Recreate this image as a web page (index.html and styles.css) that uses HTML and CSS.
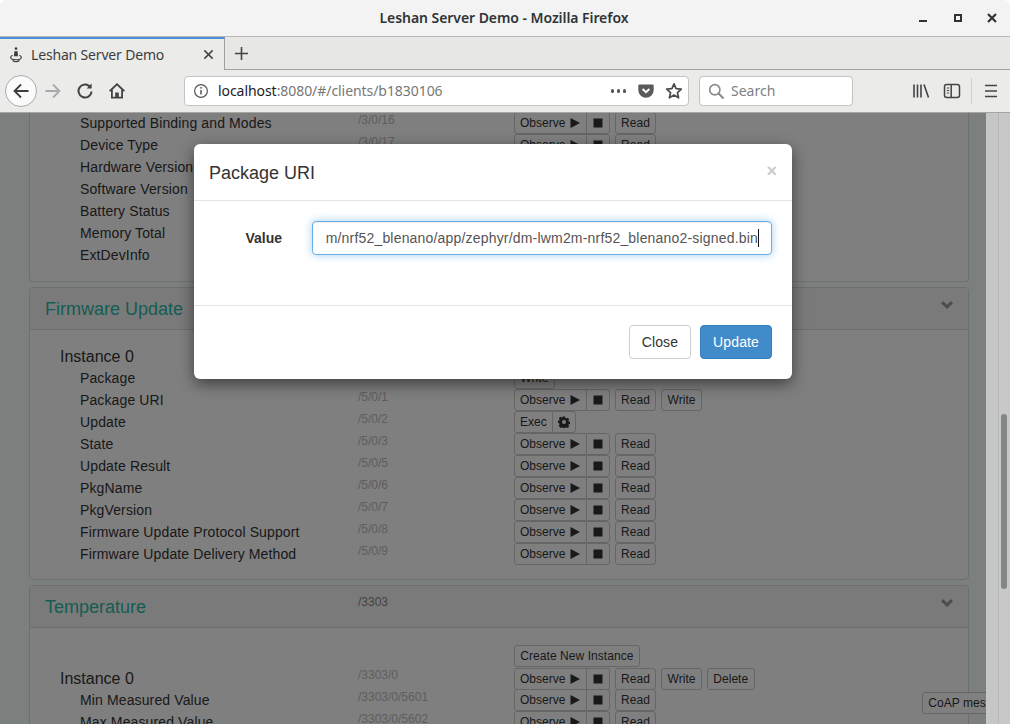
FILE: index.html
```html
<!DOCTYPE html>
<html lang="en">
<head>
<meta charset="utf-8">
<title>Leshan Server Demo - Mozilla Firefox</title>
<link rel="stylesheet" href="styles.css">
</head>
<body>
<svg class="defs" width="0" height="0" aria-hidden="true">
  <defs>
    <symbol id="play" viewBox="0 0 12 12"><path d="M1.5 1 L11 6 L1.5 11 Z"/></symbol>
    <symbol id="stop" viewBox="0 0 12 12"><rect x="1.5" y="1.5" width="9" height="9"/></symbol>
    <symbol id="gear" viewBox="0 0 12 12"><path fill-rule="evenodd" d="M4.9.6h2.2l.3 1.5 1 .4 1.3-.8 1.5 1.5-.8 1.3.4 1 1.5.3v2.2l-1.5.3-.4 1 .8 1.3-1.5 1.5-1.3-.8-1 .4-.3 1.5H4.9l-.3-1.5-1-.4-1.3.8L.8 9.6l.8-1.3-.4-1L-.3 7V4.8l1.5-.3.4-1-.8-1.3 1.5-1.5 1.3.8 1-.4zM6 3.9a2 2 0 1 0 0 4 2 2 0 0 0 0-4z"/></symbol>
    <symbol id="chev" viewBox="0 0 12 8"><path d="M0 2.2 L2.1 0 L6 3.8 L9.9 0 L12 2.2 L6 8 Z"/></symbol>
  </defs>
</svg>

<header class="titlebar">
  <span></span>
  <span class="wintitle">Leshan Server Demo - Mozilla Firefox</span>
  <div class="winctl">
    <svg class="wc" viewBox="0 0 16 16"><rect x="3" y="10" width="8" height="2"/></svg>
    <svg class="wc" viewBox="0 0 16 16"><path fill-rule="evenodd" d="M4 4h8v8H4zM6 6v4h4V6z"/></svg>
    <svg class="wc" viewBox="0 0 16 16"><path d="M4 4 L12 12 M12 4 L4 12" stroke="#2e3436" stroke-width="2.2"/></svg>
  </div>
</header>

<div class="tabstrip">
  <div class="tab">
    <svg class="favicon" viewBox="0 0 12 16" fill="none" stroke="#3a3a3a" stroke-width="1.1">
      <circle cx="6" cy="1.6" r="1.3" fill="#3a3a3a" stroke="none"/>
      <path d="M4.4 4.2h3.2L8 9.2H4z" fill="#3a3a3a" stroke="none"/>
      <path d="M2.6 8.2C1.2 8.8 .6 9.5 .6 10.3c0 1.6 2.4 2.5 5.4 2.5s5.4-.9 5.4-2.5c0-.8-.6-1.5-2-2.1"/>
      <path d="M2.5 13.5c1 .8 2.2 1.2 3.5 1.2s2.5-.4 3.5-1.2"/>
    </svg>
    <span class="tablabel">Leshan Server Demo</span>
    <svg class="tabclose" viewBox="0 0 12 12"><path d="M1.5 1.5 L10.5 10.5 M10.5 1.5 L1.5 10.5" stroke="#444" stroke-width="1.6"/></svg>
  </div>
  <div class="tabrest">
    <svg class="newtab" viewBox="0 0 16 16"><path d="M8 1v14M1 8h14" stroke="#444" stroke-width="1.7"/></svg>
  </div>
</div>

<nav class="navbar">
  <div class="tb back">
    <svg class="ic" viewBox="0 0 18 18" fill="none" stroke="#3d3d3d" stroke-width="1.8"><path d="M16.5 9H2.5M9 2.5 L2.5 9 L9 15.5"/></svg>
  </div>
  <div class="tb">
    <svg class="ic" viewBox="0 0 18 18" fill="none" stroke="#a9a9a9" stroke-width="1.8"><path d="M1.5 9h14M9 2.5 L15.5 9 L9 15.5"/></svg>
  </div>
  <div class="tb">
    <svg class="ic" viewBox="0 0 18 18" fill="none" stroke="#444" stroke-width="2"><path d="M14.5 5.5A6.5 6.5 0 1 0 15.5 9.5"/><path d="M15.6 1.5v5h-5z" fill="#444" stroke="none"/></svg>
  </div>
  <div class="tb">
    <svg class="ic" viewBox="0 0 18 18"><path fill="#444" fill-rule="evenodd" d="M9 1 L17 8.4 L15.8 9.7 L15 9V16.5H3V9L2.2 9.7 L1 8.4zM9 3.4 L4.8 7.4V14.8H7.2V10.5H10.8V14.8H13.2V7.4z"/></svg>
  </div>
  <div class="urlbar">
    <svg class="info" viewBox="0 0 16 16" fill="none" stroke="#555" stroke-width="1.2"><circle cx="8" cy="8" r="6.4"/><path d="M8 7v4.4" stroke-width="1.5"/><circle cx="8" cy="4.8" r=".9" fill="#555" stroke="none"/></svg>
    <span class="url"><span class="host">localhost</span>:8080/#/clients/b1830106</span>
    <span class="dots"><i></i><i></i><i></i></span>
    <svg class="pocket" viewBox="0 0 16 16"><path fill="#5a5a5a" d="M1.5 1.5h13A1.2 1.2 0 0 1 15.7 2.7V7A7.7 7.7 0 0 1 .3 7V2.7A1.2 1.2 0 0 1 1.5 1.5z"/><path d="M4.6 6 L8 9.2 L11.4 6" fill="none" stroke="#fff" stroke-width="2"/></svg>
    <svg class="star" viewBox="0 0 18 18"><path fill="none" stroke="#4a4a4a" stroke-width="1.7" stroke-linejoin="round" d="M9 1.8 L11.1 6.6 L16.3 7.1 L12.4 10.6 L13.6 15.8 L9 13.1 L4.4 15.8 L5.6 10.6 L1.7 7.1 L6.9 6.6z"/></svg>
  </div>
  <div class="searchbar">
    <svg class="glass" viewBox="0 0 18 18" fill="none" stroke="#8c8c8c" stroke-width="1.8"><circle cx="7.2" cy="7.2" r="5.4"/><path d="M11.2 11.2 L16.5 16.5" stroke-width="2.2"/></svg>
    <span class="searchtext">Search</span>
  </div>
  <div class="tb lib">
    <svg class="ic" viewBox="0 0 18 18" fill="none" stroke="#444" stroke-width="1.6"><path d="M2 2.5v13M5.5 2.5v13M9 2.5v13M12 2.5 L16.5 15.5"/></svg>
  </div>
  <div class="tb side">
    <svg class="ic" viewBox="0 0 18 18" fill="none" stroke="#444" stroke-width="1.5"><rect x="1.5" y="2.5" width="15" height="13" rx="2.2"/><path d="M8.2 2.5v13"/><path d="M3.8 6h2.4M3.8 8.5h2.4M3.8 11h2.4" stroke-width="1"/></svg>
  </div>
  <div class="tbsep"></div>
  <div class="tb menu">
    <svg class="ic" viewBox="0 0 18 18" fill="none" stroke="#444" stroke-width="1.7"><path d="M3 3.5h12M3 9h12M3 14.5h12"/></svg>
  </div>
</nav>

<div class="viewport">
  <main class="page">
    <section class="panel panel-cut">
      <div class="panel-body">
        <div class="row"><span class="name">Supported Binding and Modes</span><span class="path">/3/0/16</span><div class="acts"><div class="grp"><button class="btn">Observe <svg class="gl"><use href="#play"/></svg></button><button class="btn"><svg class="gl"><use href="#stop"/></svg></button></div><button class="btn">Read</button></div></div>
        <div class="row"><span class="name">Device Type</span><span class="path">/3/0/17</span><div class="acts"><div class="grp"><button class="btn">Observe <svg class="gl"><use href="#play"/></svg></button><button class="btn"><svg class="gl"><use href="#stop"/></svg></button></div><button class="btn">Read</button></div></div>
        <div class="row"><span class="name">Hardware Version</span><span class="path">/3/0/18</span></div>
        <div class="row"><span class="name">Software Version</span><span class="path">/3/0/19</span></div>
        <div class="row"><span class="name">Battery Status</span><span class="path">/3/0/20</span></div>
        <div class="row"><span class="name">Memory Total</span><span class="path">/3/0/21</span></div>
        <div class="row"><span class="name">ExtDevInfo</span><span class="path">/3/0/22</span></div>
      </div>
    </section>

    <section class="panel">
      <div class="panel-heading">
        <h3 class="ptitle">Firmware Update</h3><span class="hpath">/5</span>
        <svg class="chev"><use href="#chev"/></svg>
      </div>
      <div class="panel-body">
        <div class="row inst"><span class="iname">Instance 0</span><span class="path">/5/0</span></div>
        <div class="row"><span class="name">Package</span><span class="path">/5/0/0</span><div class="acts"><button class="btn">Write</button></div></div>
        <div class="row"><span class="name">Package URI</span><span class="path">/5/0/1</span><div class="acts"><div class="grp"><button class="btn">Observe <svg class="gl"><use href="#play"/></svg></button><button class="btn"><svg class="gl"><use href="#stop"/></svg></button></div><button class="btn">Read</button><button class="btn">Write</button></div></div>
        <div class="row"><span class="name">Update</span><span class="path">/5/0/2</span><div class="acts"><div class="grp"><button class="btn">Exec</button><button class="btn"><svg class="gl"><use href="#gear"/></svg></button></div></div></div>
        <div class="row"><span class="name">State</span><span class="path">/5/0/3</span><div class="acts"><div class="grp"><button class="btn">Observe <svg class="gl"><use href="#play"/></svg></button><button class="btn"><svg class="gl"><use href="#stop"/></svg></button></div><button class="btn">Read</button></div></div>
        <div class="row"><span class="name">Update Result</span><span class="path">/5/0/5</span><div class="acts"><div class="grp"><button class="btn">Observe <svg class="gl"><use href="#play"/></svg></button><button class="btn"><svg class="gl"><use href="#stop"/></svg></button></div><button class="btn">Read</button></div></div>
        <div class="row"><span class="name">PkgName</span><span class="path">/5/0/6</span><div class="acts"><div class="grp"><button class="btn">Observe <svg class="gl"><use href="#play"/></svg></button><button class="btn"><svg class="gl"><use href="#stop"/></svg></button></div><button class="btn">Read</button></div></div>
        <div class="row"><span class="name">PkgVersion</span><span class="path">/5/0/7</span><div class="acts"><div class="grp"><button class="btn">Observe <svg class="gl"><use href="#play"/></svg></button><button class="btn"><svg class="gl"><use href="#stop"/></svg></button></div><button class="btn">Read</button></div></div>
        <div class="row"><span class="name">Firmware Update Protocol Support</span><span class="path">/5/0/8</span><div class="acts"><div class="grp"><button class="btn">Observe <svg class="gl"><use href="#play"/></svg></button><button class="btn"><svg class="gl"><use href="#stop"/></svg></button></div><button class="btn">Read</button></div></div>
        <div class="row"><span class="name">Firmware Update Delivery Method</span><span class="path">/5/0/9</span><div class="acts"><div class="grp"><button class="btn">Observe <svg class="gl"><use href="#play"/></svg></button><button class="btn"><svg class="gl"><use href="#stop"/></svg></button></div><button class="btn">Read</button></div></div>
      </div>
    </section>

    <section class="panel">
      <div class="panel-heading">
        <h3 class="ptitle">Temperature</h3><span class="hpath">/3303</span>
        <svg class="chev"><use href="#chev"/></svg>
      </div>
      <div class="panel-body">
        <div class="row create"><span></span><span></span><div class="acts"><button class="btn">Create New Instance</button></div></div>
        <div class="row inst"><span class="iname">Instance 0</span><span class="path">/3303/0</span><div class="acts"><div class="grp"><button class="btn">Observe <svg class="gl"><use href="#play"/></svg></button><button class="btn"><svg class="gl"><use href="#stop"/></svg></button></div><button class="btn">Read</button><button class="btn">Write</button><button class="btn">Delete</button></div></div>
        <div class="row"><span class="name">Min Measured Value</span><span class="path">/3303/0/5601</span><div class="acts"><div class="grp"><button class="btn">Observe <svg class="gl"><use href="#play"/></svg></button><button class="btn"><svg class="gl"><use href="#stop"/></svg></button></div><button class="btn">Read</button></div></div>
        <div class="row"><span class="name">Max Measured Value</span><span class="path">/3303/0/5602</span><div class="acts"><div class="grp"><button class="btn">Observe <svg class="gl"><use href="#play"/></svg></button><button class="btn"><svg class="gl"><use href="#stop"/></svg></button></div><button class="btn">Read</button></div></div>
      </div>
    </section>

    <button class="btn coap">CoAP messages</button>
    <div class="backdrop"></div>

    <div class="modal">
      <div class="modal-header">
        <h4 class="modal-title">Package URI</h4>
        <span class="close">×</span>
      </div>
      <div class="modal-body">
        <label class="flabel">Value</label>
        <div class="input"><div class="inputclip"><span class="inputtext">lwm2m/nrf52_blenano/app/zephyr/dm-lwm2m-nrf52_blenano2-signed.bin</span><i class="caret"></i></div></div>
      </div>
      <div class="modal-footer">
        <button class="mbtn">Close</button>
        <button class="mbtn primary">Update</button>
      </div>
    </div>
  </main>
  <aside class="scrollbar"><div class="sb-a"></div><div class="sb-b"><div class="thumb"></div></div></aside>
</div>
</body>
</html>
```
FILE: styles.css
```css
* { box-sizing: border-box; }
html, body { margin: 0; padding: 0; }
body {
  width: 1010px; height: 724px; overflow: hidden;
  display: flex; flex-direction: column;
  font-family: "Liberation Sans", Arial, sans-serif;
  font-size: 14px; color: #333; background: #fff;
}
.defs { position: absolute; }

/* window chrome */
.titlebar {
  height: 37px; flex: none;
  display: grid; grid-template-columns: 1fr auto 1fr; align-items: center;
  background: #f3f3f3; border-bottom: 1px solid #b9b9b6;
  border-radius: 6px 6px 0 0; padding-bottom: 1px;
}
.wintitle { font: 600 14px "Noto Sans", sans-serif; color: #2e3436; letter-spacing: -.06px; margin-right: 2px; }
.winctl { display: flex; justify-content: flex-end; gap: 18px; padding-right: 10px; }
.wc { width: 16px; height: 16px; fill: #2e3436; }

.tabstrip { height: 33px; flex: none; display: flex; background: #e7e7e5; }
.tab {
  width: 225px; display: flex; align-items: center;
  background: #ebebea; border-top: 2px solid #4a90d9; border-right: 1px solid #9f9f9d;
  padding: 0 10px;
}
.favicon { width: 12px; height: 16px; flex: none; margin-right: 9px; }
.tablabel { font: 14px "Noto Sans", sans-serif; color: #3d3d3d; flex: 1; letter-spacing: -.17px; }
.tabclose { width: 11px; height: 11px; margin-right: 0; }
.tabrest { flex: 1; display: flex; align-items: center; padding-left: 9px; border-bottom: 1px solid #a3a3a1; }
.newtab { width: 15px; height: 15px; }

.navbar {
  height: 43px; flex: none; display: flex; align-items: center;
  background: #ebebea; border-bottom: 1px solid #a5a5a3; padding-left: 5px;
}
.tb { width: 32px; height: 32px; flex: none; display: flex; align-items: center; justify-content: center; }
.ic { width: 18px; height: 18px; }
.back { border-radius: 50%; background: #fbfbfb; border: 1px solid #ababab; }
.urlbar, .searchbar {
  height: 30px; display: flex; align-items: center; flex: none;
  background: #fff; border: 1px solid #c3c3c1; border-radius: 4px;
  font-family: "Noto Sans", sans-serif;
}
.urlbar { width: 505px; margin-left: 51px; padding: 0 5px 0 8px; }
.info { width: 16px; height: 16px; flex: none; }
.url { flex: 1; margin-left: 9px; padding-bottom: 2px; font-size: 14px; color: #777; white-space: nowrap; letter-spacing: -.06px; }
.host { color: #222; }
.dots { display: flex; gap: 2.5px; margin-right: 12px; }
.dots i { width: 3.5px; height: 3.5px; border-radius: 50%; background: #555; }
.pocket { width: 16px; height: 16px; margin-right: 11px; }
.star { width: 18px; height: 18px; }
.searchbar { width: 154px; margin-left: 10px; padding-left: 8px; }
.glass { width: 17px; height: 17px; flex: none; }
.searchtext { margin-left: 6px; padding-bottom: 2px; font-size: 14px; color: #808080; }
.lib { margin-left: 52px; }
.side { margin-left: -1px; }
.tbsep { width: 1px; height: 26px; background: #cfcfcd; margin: 0 3px 0 3px; }
.menu { margin-left: 0; }

/* viewport */
.viewport { flex: 1; min-height: 0; display: flex; }
.page { flex: 1; min-width: 0; position: relative; overflow: hidden; background: #f7fffd; padding: 0 17px 0 29px; }

.panel { background: #fff; border: 1px solid #ddd; border-radius: 4px; margin-bottom: 5px; }
.panel-cut { border-top: 0; border-radius: 0 0 4px 4px; margin-top: -1px; }
.panel-heading {
  height: 42px; display: grid; grid-template-columns: 313px 1fr auto;
  padding: 0 15px; background: #f5f5f5; border-bottom: 1px solid #ddd;
  border-radius: 3px 3px 0 0;
}
.ptitle { margin: 0; font-size: 18px; font-weight: 400; line-height: 20px; padding-top: 11px; color: #2bbaa8; }
.hpath { font-size: 12px; color: #888; padding-top: 9px; line-height: 14px; }
.chev { width: 12px; height: 8px; margin: 13px 0 0; fill: #999; }
.panel-body { padding: 15px 0 14px; }
.panel-cut .panel-body { padding: 0 0 15px; }

.row { height: 22px; display: grid; grid-template-columns: 328px 156px 1fr; align-items: center; }
.name { padding-left: 50px; line-height: 22px; white-space: nowrap; letter-spacing: .125px; }
.iname { padding-left: 30px; font-size: 16px; line-height: 22px; margin-top: 1px; }
.path { font-size: 12px; color: #bbb; line-height: 14px; align-self: start; padding-top: 1px; }
.acts { display: flex; gap: 5px; }
.grp { display: flex; }
.grp .btn + .btn { margin-left: -1px; border-radius: 0 3px 3px 0; }
.grp .btn:first-child:not(:last-child) { border-radius: 3px 0 0 3px; }
.btn {
  font: 12px/18px "Liberation Sans", Arial, sans-serif; color: #333; letter-spacing: .06px;
  height: 22px; padding: 1px 5.3px; background: #fff; border: 1px solid #ccc; border-radius: 3px;
  white-space: pre; display: inline-flex; align-items: center;
}
.grp .btn { padding: 1px 5px; letter-spacing: 0; }
.gl { width: 12px; height: 12px; fill: #333; flex: none; }
.create { margin-top: 2px; }

.coap { position: absolute; left: 922px; bottom: 10px; }

/* modal */
.backdrop { position: absolute; inset: 0; background: rgba(0,0,0,.5); }
.modal {
  position: absolute; left: 194px; top: 31px; width: 598px;
  background: #fff; border-radius: 6px; box-shadow: 0 5px 15px rgba(0,0,0,.5);
}
.modal-header {
  height: 57px; padding: 15px; border-bottom: 1px solid #e5e5e5;
  display: flex; justify-content: space-between; align-items: flex-start;
}
.modal-title { margin: 0; font-size: 18px; font-weight: 400; line-height: 28px; color: #333; }
.close { font-size: 18px; font-weight: 700; line-height: 22px; color: #ccc; margin-top: 1px; }
.modal-body { height: 104px; padding: 20px; display: grid; grid-template-columns: 68px 1fr; column-gap: 30px; align-items: start; }
.flabel { font-weight: 700; font-size: 14px; text-align: right; line-height: 20px; padding-top: 7px; }
.input {
  width: 460px; height: 34px; padding: 6px 12px;
  background: #fff; border: 1px solid #66afe9; border-radius: 4px;
  box-shadow: inset 0 1px 1px rgba(0,0,0,.075), 0 0 8px rgba(102,175,233,.6);
}
.inputclip { display: flex; justify-content: flex-end; overflow: hidden; height: 20px; align-items: center; }
.inputtext { flex: none; font-size: 14px; line-height: 20px; color: #555; white-space: nowrap; letter-spacing: .185px; }
.caret { flex: none; width: 1px; height: 18px; background: #111; }
.modal-footer { height: 74px; padding: 19px 20px; border-top: 1px solid #e5e5e5; display: flex; justify-content: flex-end; gap: 9px; }
.mbtn {
  height: 34px; padding: 6px 12px; font: 14px/20px "Liberation Sans", Arial, sans-serif; letter-spacing: .125px;
  color: #333; background: #fff; border: 1px solid #ccc; border-radius: 4px;
}
.primary { color: #fff; background: #428bca; border-color: #357ebd; }

/* scrollbar */
.scrollbar { width: 24px; flex: none; display: flex; }
.sb-a { width: 13px; background: #c4c7c5; border-right: 1px solid #b5b7b6; }
.sb-b { flex: 1; background: #c7c8c7; padding: 301px 3px 0 2px; }
.thumb { height: 175px; background: #828685; border-radius: 3px; }
```
